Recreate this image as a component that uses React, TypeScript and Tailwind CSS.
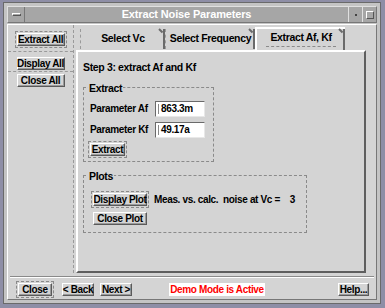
import React from "react";

const raised =
  "border border-t-white border-l-white border-r-[#5a5a5a] border-b-[#5a5a5a] bg-[#d4d4d4] shadow-[inset_-1px_-1px_0_#9a9a9a]";

function MotifButton({ label, focus, className = "" }: { label: string; focus?: boolean; className?: string }) {
  return (
    <div className={`p-px border ${focus ? "border-dashed border-[#8a8a8a]" : "border-transparent"} ${className}`}>
      <div className={`${raised} h-[13px] px-[2px] flex items-center justify-center leading-none text-[10px] font-bold tracking-[-0.35px] text-black whitespace-nowrap`}>
        {label}
      </div>
    </div>
  );
}

function Tab({ label, active, w }: { label: string; active?: boolean; w: string }) {
  return (
    <div
      className={`relative ${w} ${active ? "h-[23px] -mb-[2px] z-10 bg-[#d4d4d4] border-t-2 border-l-2 border-t-white border-l-white" : "h-[20px] mt-[2px] border-l border-dashed border-[#9a9a9a]"} flex items-center justify-center text-[10.5px] font-bold tracking-[-0.35px]`}
    >
      <span className={active ? "px-1 border-b border-dashed border-[#8a8a8a] -mt-[2px]" : ""}>{label}</span>
      <div className="absolute right-0 top-0 h-full w-[2px] bg-[#6a6a6a]" />
      <div className="absolute right-[1px] top-[-1px] w-[5px] h-[2px] bg-[#6a6a6a] rotate-45 origin-left" />
    </div>
  );
}

const txt = "text-[10px] font-bold tracking-[-0.35px] leading-none whitespace-nowrap";

export default function App() {
  return (
    <div
      className="w-[385px] h-[308px] bg-[#8e8ea6] pl-[3px] pt-[2px]"
      style={{ fontFamily: '"Liberation Sans", Arial, sans-serif' }}
    >
      <div className="w-[378px] h-[302px] border border-[#6a6a6a] bg-[#c4c4c4] p-[3px] flex flex-col">
        {/* title bar */}
        <div className="h-[17px] flex border border-t-[#e0e0e0] border-l-[#e0e0e0] border-r-[#777] border-b-[#777] bg-[#a6a6a6]">
          <div className="w-[17px] flex items-center justify-center border-r border-[#777]">
            <div className="w-[9px] h-[3px] border border-t-white border-l-white border-r-[#555] border-b-[#555]" />
          </div>
          <div className="flex-1 flex items-center justify-center text-white text-[11px] font-bold tracking-[-0.15px]">
            Extract Noise Parameters
          </div>
          <div className="w-[14px] flex items-center justify-center border-l border-[#e0e0e0]">
            <div className="w-[2px] h-[2px] bg-[#444]" />
          </div>
          <div className="w-[14px] flex items-center justify-center border-l border-[#e0e0e0]">
            <div className="w-[8px] h-[8px] border border-t-white border-l-white border-r-[#555] border-b-[#555]" />
          </div>
        </div>

        {/* body */}
        <div className="flex-1 border border-t-white border-l-white border-r-[#777] border-b-[#777] bg-[#d4d4d4] flex flex-col mt-[1px]">
          <div className="flex h-[248px]">
            {/* left column */}
            <div className="w-[66px] flex flex-col items-center pt-[6px] border-r border-dashed border-[#9a9a9a]">
              <MotifButton label="Extract All" focus className="w-[52px]" />
              <div className="w-full border-b border-dashed border-[#9a9a9a] mt-[3px] mb-[3px]" />
              <MotifButton label="Display All" className="w-[52px]" />
              <div className="w-full border-b border-dashed border-[#9a9a9a] -mt-[1px]" />
              <MotifButton label="Close All" className="w-[52px]" />
            </div>

            {/* tabs + panel */}
            <div className="flex-1 flex flex-col pl-[2px] pt-[2px] pr-[10px]">
              <div className="flex h-[23px] pl-[4px] items-start">
                <Tab label="Select Vc" w="w-[85px]" />
                <Tab label="Select Frequency" w="w-[90px]" />
                <Tab label="Extract Af, Kf" active w="w-[90px]" />
              </div>
              <div className="h-[223px] border-2 border-t-white border-l-white border-r-[#5e5e5e] border-b-[#5e5e5e] bg-[#d4d4d4] pl-[5px] pt-[10px]">
                <div className="text-[10.5px] font-bold tracking-[-0.35px] leading-none">Step 3: extract Af and Kf</div>

                {/* Extract group */}
                <fieldset className="mt-[10px] w-[131px] h-[79px] border border-dashed border-[#8a8a8a] px-[6px] pb-0">
                  <legend className="text-[10.5px] font-bold tracking-[-0.35px] leading-none px-[1px] -ml-[2px]">Extract</legend>
                  <div className="flex items-center mt-[8px]">
                    <span className={`w-[65px] ${txt}`}>Parameter Af</span>
                    <div className={`w-[50px] h-[16px] bg-white border border-t-[#6a6a6a] border-l-[#6a6a6a] border-r-[#e8e8e8] border-b-[#e8e8e8] flex items-center pl-[2px] ${txt}`}>
                      <span className="w-[1px] h-[10px] bg-[#888] mr-[2px]" />863.3m
                    </div>
                  </div>
                  <div className="flex items-center mt-[5px]">
                    <span className={`w-[65px] ${txt}`}>Parameter Kf</span>
                    <div className={`w-[50px] h-[16px] bg-white border border-t-[#6a6a6a] border-l-[#6a6a6a] border-r-[#e8e8e8] border-b-[#e8e8e8] flex items-center pl-[2px] ${txt}`}>
                      <span className="w-[1px] h-[10px] bg-[#888] mr-[2px]" />49.17a
                    </div>
                  </div>
                  <MotifButton label="Extract" focus className="w-[39px] mt-[3px] -ml-[2px]" />
                </fieldset>

                {/* Plots group */}
                <fieldset className="mt-[9px] w-[224px] h-[62px] border border-dashed border-[#8a8a8a] px-[8px]">
                  <legend className="text-[10.5px] font-bold tracking-[-0.35px] leading-none px-[1px] -ml-[4px]">Plots</legend>
                  <div className="flex items-center mt-[10px] -ml-[1px]">
                    <MotifButton label="Display Plot" focus className="w-[58px]" />
                    <span className={`ml-[5px] ${txt} tracking-[-0.2px]`}>Meas. vs. calc.&nbsp; noise at Vc =&nbsp;&nbsp;&nbsp; 3</span>
                  </div>
                  <MotifButton label="Close Plot" className="w-[58px] mt-[2px] -ml-[1px]" />
                </fieldset>
              </div>
            </div>
          </div>

          {/* bottom bar */}
          <div className="mt-[3px] mx-[2px] border-t border-[#8a8a8a] shadow-[0_1px_0_white]" />
          <div className="flex items-center pl-[8px] pr-[5px] pt-[4px]">
            <MotifButton label="Close" focus className="w-[38px]" />
            <MotifButton label="< Back" className="w-[36px] ml-[6px]" />
            <MotifButton label="Next >" className="w-[36px] ml-[2px]" />
            <div className={`ml-[35px] w-[96px] h-[13px] bg-white text-[#ff0000] flex items-center justify-center ${txt}`}>
              Demo Mode is Active
            </div>
            <div className="flex-1" />
            <MotifButton label="Help..." className="w-[35px]" />
          </div>
        </div>
      </div>
    </div>
  );
}
